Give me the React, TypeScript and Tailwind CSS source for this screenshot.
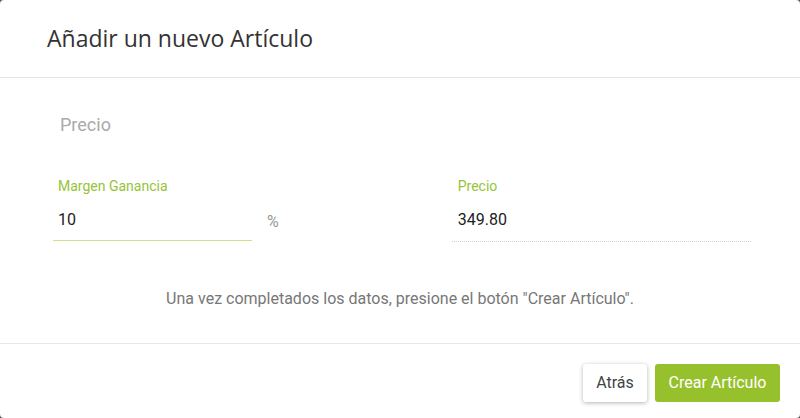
import React from "react";

export default function App() {
  return (
    <div className="w-[800px] h-[418px] bg-[#5a5a5a] overflow-hidden" style={{ fontFamily: "Roboto, 'Liberation Sans', sans-serif" }}>
      <div className="w-full h-full bg-white rounded-[4px] flex flex-col">
        <div className="h-[78px] border-b border-[#e5e5e5] flex items-center px-[47px] pb-[1px]">
          <h1 className="text-[23px] leading-[30px] text-[#333]" style={{ fontFamily: "'Open Sans', 'Noto Sans', sans-serif" }}>
            Añadir un nuevo Artículo
          </h1>
        </div>
        <div className="h-[266px] border-b border-[#e8e8e8] pt-[35px]">
          <div className="pl-[60px] text-[18px] leading-[24px] text-[#aaaaaa]">Precio</div>
          <div className="mt-[39px] flex">
            <div className="ml-[53px] w-[199px]">
              <div className="pl-[5px] text-[14px] leading-[20px] text-[#95c43a]">Margen Ganancia</div>
              <div className="h-[45px] flex items-center pl-[5px] pt-[4px] text-[16px] text-[#222] border-b border-[#c9e38a]">10</div>
            </div>
            <div className="ml-[15px] pt-[36px] text-[16px] leading-[20px] text-[#999]">%</div>
            <div className="ml-[173px] w-[299px]">
              <div className="pl-[6px] text-[14px] leading-[20px] text-[#95c43a]">Precio</div>
              <div className="h-[46px] flex items-center pl-[6px] pt-[2px] text-[16px] text-[#222] border-b border-dotted border-[#cfcfcf]">349.80</div>
            </div>
          </div>
          <div className="mt-[47px] text-center text-[16px] leading-[20px] text-[#777]">
            Una vez completados los datos, presione el botón "Crear Artículo".
          </div>
        </div>
        <div className="flex justify-end gap-[8px] pt-[20px] pr-[20px]">
          <button className="h-[38px] w-[64px] rounded-[3px] bg-white text-[16px] text-[#444] shadow-[0_1px_4px_rgba(0,0,0,0.3)]">
            Atrás
          </button>
          <button className="h-[38px] w-[125px] rounded-[3px] bg-[#97c12c] text-[16px] text-white">
            Crear Artículo
          </button>
        </div>
      </div>
    </div>
  );
}
